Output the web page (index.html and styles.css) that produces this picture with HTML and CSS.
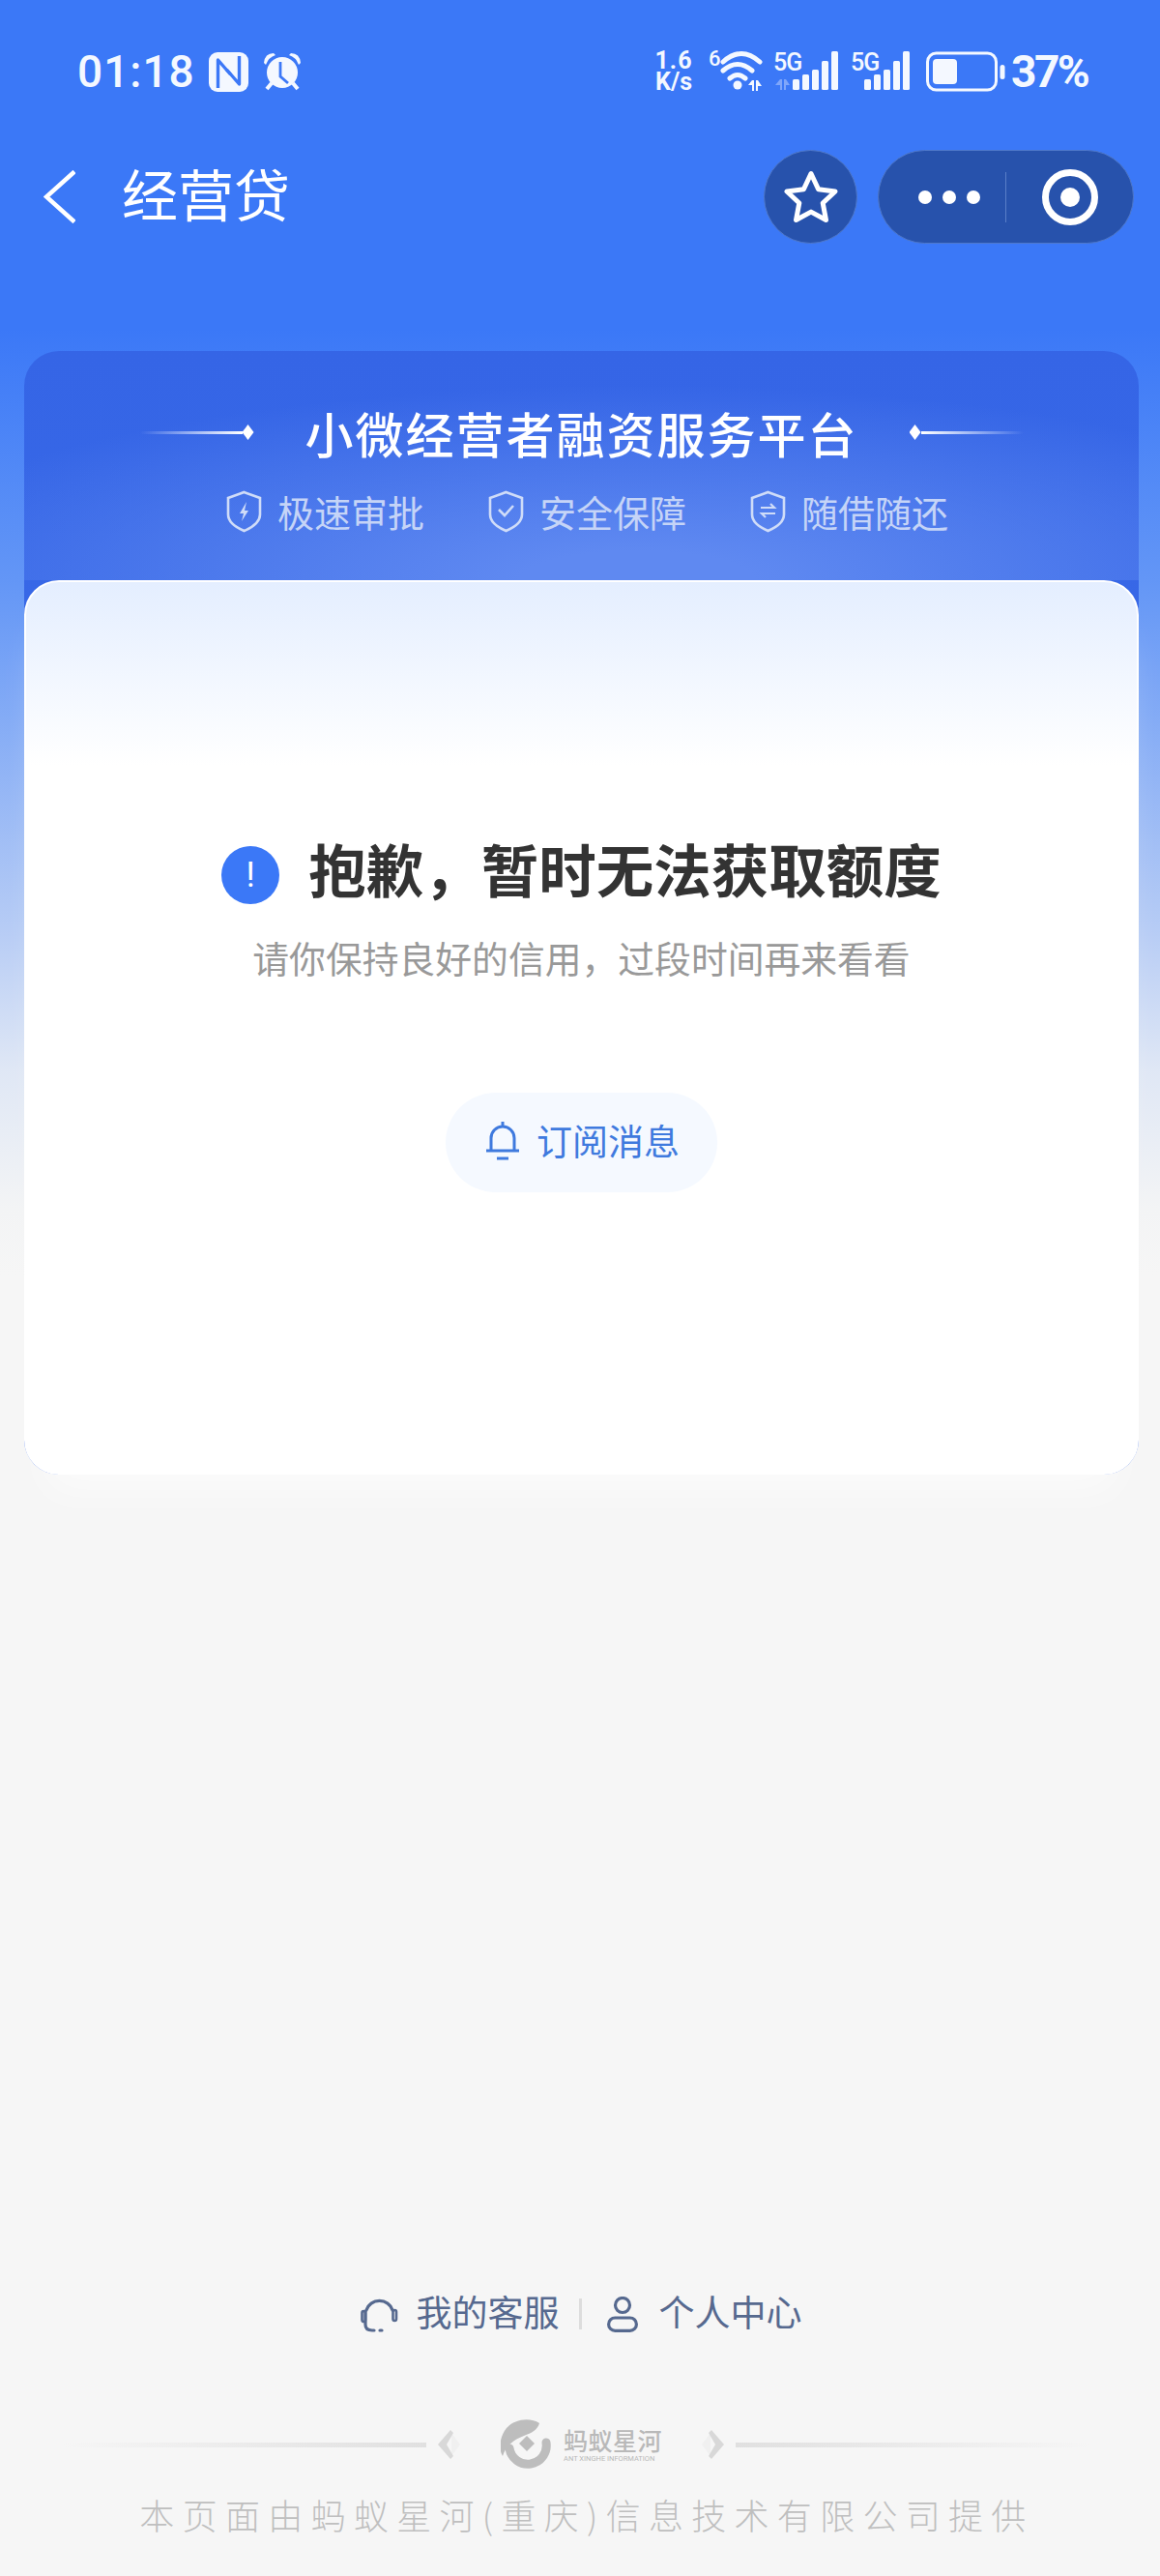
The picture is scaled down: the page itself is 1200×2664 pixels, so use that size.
FILE: index.html
```html
<!DOCTYPE html>
<html lang="zh-CN">

<head>
    <meta charset="UTF-8">
    <meta name="viewport" content="width=device-width, initial-scale=1.0">
    <title>经营贷</title>
    <link rel="stylesheet" href="styles.css">
</head>

<body>
    <div class="page">
        <div class="status">
            <span class="time">01:18</span>
            <svg class="ic-nfc" viewBox="0 0 41 41">
                <rect width="41" height="41" rx="9" fill="#f4f8ff" />
                <path fill="none" stroke="#3c78f7" stroke-width="3.400" stroke-linejoin="round" d="M9.500 37V8l13 15" />
                <path fill="none" stroke="#3c78f7" stroke-width="3.400" stroke-linejoin="round" d="M31.500 4v29l-13-15" />
            </svg>
            <svg class="ic-alarm" viewBox="0 0 41 41">
                <circle cx="20" cy="21" r="16" fill="#f4f8ff" />
                <path fill="#f4f8ff" d="M1 11Q2 1 11 1L13 3Q6 5 3 13zM39 11Q38 1 29 1L27 3Q34 5 37 13z" />
                <path stroke="#f4f8ff" stroke-width="4" d="M9 32l-5 6M31 32l5 6" />
                <path fill="none" stroke="#3c78f7" stroke-width="2.800" d="M18 10v15l8 7" />
            </svg>

            <div class="speed"><span class="speed-num">1.6</span><span>K/s</span></div>
            <svg class="ic-wifi" viewBox="0 0 57 42">
                <text x="0" y="15" class="svg-txt" font-size="22">6</text>
                <path fill="none" stroke="#f4f8ff" stroke-width="5" stroke-linecap="round" d="M15 11Q34-6 53 11" />
                <path fill="none" stroke="#f4f8ff" stroke-width="5" stroke-linecap="round" d="M15 20Q30 7 45 20" />
                <path fill="none" stroke="#f4f8ff" stroke-width="5" stroke-linecap="round" d="M22 28Q30 21 38 28" />
                <circle cx="30" cy="35" r="4.500" fill="#f4f8ff" />
                <path fill="#f4f8ff" d="M41 35l4-5h2v11h-2v-6zM49 30h2l4 6h-4v5h-2z" />
            </svg>
            <svg class="ic-sig" viewBox="0 0 67 42">
                <text x="0" y="20" class="svg-txt" font-size="25" letter-spacing="-1">5G</text>
                <path fill="#7fa6fa" d="M2 35l5-6h2v11H7v-5zM11 29h2l4 6h-4v5h-2z" />
                <rect x="20" y="29" width="7" height="11" rx="1.500" fill="#f4f8ff" />
                <rect x="30" y="24" width="7" height="16" rx="1.500" fill="#f4f8ff" />
                <rect x="40" y="19" width="7" height="21" rx="1.500" fill="#f4f8ff" />
                <rect x="50" y="10" width="7" height="30" rx="1.500" fill="#f4f8ff" />
                <rect x="60" y="0" width="7" height="40" rx="1.500" fill="#f4f8ff" />
            </svg>
            <svg class="ic-sig2" viewBox="0 0 61 42">
                <text x="0" y="20" class="svg-txt" font-size="25" letter-spacing="-1">5G</text>
                <rect x="14" y="29" width="7" height="11" rx="1.500" fill="#f4f8ff" />
                <rect x="24" y="24" width="7" height="16" rx="1.500" fill="#f4f8ff" />
                <rect x="34" y="19" width="7" height="21" rx="1.500" fill="#f4f8ff" />
                <rect x="44" y="10" width="7" height="30" rx="1.500" fill="#f4f8ff" />
                <rect x="54" y="0" width="7" height="40" rx="1.500" fill="#f4f8ff" />
            </svg>
            <svg class="ic-batt" viewBox="0 0 82 42">
                <rect x="1.500" y="2" width="71" height="38" rx="9" fill="none" stroke="#f4f8ff" stroke-width="3" />
                <rect x="7" y="8" width="25" height="26" rx="4" fill="#f4f8ff" />
                <rect x="76.500" y="14" width="5" height="15" rx="2.500" fill="#f4f8ff" />
            </svg>
            <span class="pct">37%</span>
        </div>

        <div class="nav">
            <svg class="ic-back" viewBox="0 0 33 55">
                <path fill="none" stroke="#fff" stroke-width="4.500" d="M32 1.500L3 27.500l29 26" />
            </svg>
            <h1 class="nav-title">经营贷</h1>
            <div class="actions">
                <div class="fav">
                    <svg class="ic-star" viewBox="0 0 56 56">
                        <path fill="none" stroke="#fff" stroke-width="5" stroke-linejoin="round" d="M28 3.500l7.600 16.300 17.400 2.200-12.800 12 3.300 17.500L28 43.100 12.500 51.500l3.300-17.500L3 22l17.400-2.200z" />
                    </svg>
                </div>
                <div class="capsule">
                    <div class="dots"><i></i><i></i><i></i></div>
                    <div class="cap-line"></div>
                    <div class="ring"><i></i></div>
                </div>
            </div>
        </div>

        <div class="panel">
            <div class="panel-head">
                <div class="slogan">
                    <div class="deco"><span class="deco-line"></span><span class="deco-dot"></span></div>
                    <h2 class="slogan-text">小微经营者融资服务平台</h2>
                    <div class="deco deco-right"><span class="deco-line"></span><span class="deco-dot"></span></div>
                </div>
                <div class="features">
                    <div class="feature">
                        <svg class="ic-shield" viewBox="0 0 37 44">
                            <path class="shield" d="M18.500 2L35 8v17q0 10-16.500 17Q2 35 2 25V8z" />
                            <path fill="#cfdcf8" d="M21 12l-7 12h4l-2 8 7-11h-4z" />
                        </svg>
                        <span>极速审批</span>
                    </div>
                    <div class="feature">
                        <svg class="ic-shield" viewBox="0 0 37 44">
                            <path class="shield" d="M18.500 2L35 8v17q0 10-16.500 17Q2 35 2 25V8z" />
                            <path fill="none" stroke="#cfdcf8" stroke-width="2.600" d="M11 20l6 6 9-10" />
                        </svg>
                        <span>安全保障</span>
                    </div>
                    <div class="feature">
                        <svg class="ic-shield" viewBox="0 0 37 44">
                            <path class="shield" d="M18.500 2L35 8v17q0 10-16.500 17Q2 35 2 25V8z" />
                            <path fill="none" stroke="#cfdcf8" stroke-width="2.200" d="M11 18h14l-4-4M26 24H12l4 4" />
                        </svg>
                        <span>随借随还</span>
                    </div>
                </div>
            </div>

            <div class="card">
                <div class="result">
                    <div class="result-ic">!</div>
                    <h3 class="result-title">抱歉，暂时无法获取额度</h3>
                </div>
                <p class="result-sub">请你保持良好的信用，过段时间再来看看</p>
                <div class="sub-btn">
                    <svg class="ic-bell" viewBox="0 0 36 42">
                        <path fill="none" stroke="#3f7ade" stroke-width="3" d="M1 32h34M6 32V19a12 12 0 0 1 24 0v13M18 7V2" />
                        <path stroke="#3f7ade" stroke-width="3" d="M12 40h12" />
                    </svg>
                    <span>订阅消息</span>
                </div>
            </div>
        </div>

        <div class="foot">
            <div class="links">
                <svg class="ic-head" viewBox="0 0 39 38">
                    <path fill="none" stroke="#56698f" stroke-width="3.200" stroke-linecap="round" d="M6 15a14 13 0 0 1 27 0M5 16v14q0 6 7 6h2M20 36h2" />
                    <rect x="1.500" y="16" width="3.500" height="11" rx="1.700" fill="none" stroke="#56698f" stroke-width="2.600" />
                    <rect x="33.500" y="15" width="3.500" height="11" rx="1.700" fill="none" stroke="#56698f" stroke-width="2.600" />
                </svg>
                <span class="link-text">我的客服</span>
                <span class="link-line"></span>
                <svg class="ic-user" viewBox="0 0 32 37">
                    <circle cx="16" cy="9" r="7.500" fill="none" stroke="#56698f" stroke-width="3.200" />
                    <rect x="1.600" y="22" width="28.800" height="13.400" rx="6.700" fill="none" stroke="#56698f" stroke-width="3.200" />
                </svg>
                <span class="link-text">个人中心</span>
            </div>

            <div class="brand">
                <span class="brand-line"></span>
                <svg class="ic-chev" viewBox="0 0 24 30">
                    <path fill="#f0f0f0" d="M14 3l9 12-9 12z" />
                    <path fill="#d8d8d8" d="M13 0L0 15l13 15 3-3-7-12 7-12z" />
                </svg>
                <svg class="ic-logo" viewBox="0 0 52 52">
                    <path fill="#bdbdbd" d="M40 4C31-2 15-1 6 9-2 19-2 32 2 38 5 28 13 21 24 17 32 14 38 11 40 4z" />
                    <path fill="none" stroke="#bdbdbd" stroke-width="9" stroke-linecap="round" d="M9 30A18.500 18.500 0 0 0 47 24" />
                    <path fill="#bdbdbd" d="M27 17l8 8-8 8-8-8z" />
                </svg>
                <div class="brand-name">
                    <span class="brand-cn">蚂蚁星河</span>
                    <span class="brand-en">ANT XINGHE INFORMATION</span>
                </div>
                <svg class="ic-chev ic-chev-r" viewBox="0 0 24 30">
                    <path fill="#f0f0f0" d="M10 3L1 15l9 12z" />
                    <path fill="#d8d8d8" d="M11 0l13 15-13 15-3-3 7-12L8 3z" />
                </svg>
                <span class="brand-line brand-line-r"></span>
            </div>

            <p class="copy">本页面由蚂蚁星河(重庆)信息技术有限公司提供</p>
        </div>
    </div>
</body>

</html>
```

FILE: styles.css
```css
* {
    box-sizing: border-box;
    margin: 0;
    padding: 0;
}

body {
    width: 1200px;
    height: 2664px;
    overflow: hidden;
    font-family: "Noto Sans CJK SC", "Noto Sans", sans-serif;
    background: #f6f6f6;
}

.page {
    display: flex;
    flex-direction: column;
    height: 2664px;
    background: linear-gradient(180deg, #3b78f7 0, #3b78f7 340px, #6396f6 600px, #b8cdf5 967px, #dfe7f5 1105px, #f3f4f5 1250px, #f6f6f6 1320px);
}

/* status bar */
.status {
    display: flex;
    align-items: center;
    height: 42px;
    margin-top: 53px;
    padding: 0 73px 0 80px;
    color: #f4f8ff;
}

.status svg {
    overflow: visible;
}

.svg-txt {
    font-family: Roboto, sans-serif;
    font-weight: 500;
    fill: #f4f8ff;
}

.time {
    width: 121px;
    font: 500 46px/42px Roboto, sans-serif;
    letter-spacing: 1px;
}

.ic-nfc {
    width: 41px;
    height: 41px;
    margin-left: 15px;
}

.ic-alarm {
    width: 41px;
    height: 41px;
    margin-left: 15px;
}

.speed {
    display: flex;
    flex-direction: column;
    align-items: center;
    width: 44px;
    margin-left: auto;
    font: 700 25px/22px Roboto, sans-serif;
}

.speed-num {
    letter-spacing: 1px;
}

.ic-wifi {
    width: 57px;
    height: 42px;
    margin-left: 14px;
}

.ic-sig {
    width: 67px;
    height: 42px;
    margin-left: 10px;
}

.ic-sig2 {
    width: 61px;
    height: 42px;
    margin-left: 13px;
}

.ic-batt {
    width: 82px;
    height: 42px;
    margin-left: 17px;
}

.pct {
    width: 81px;
    margin-left: 6px;
    font: 700 46px/42px Roboto, sans-serif;
    letter-spacing: -2.500px;
    white-space: nowrap;
}

/* nav */
.nav {
    display: flex;
    align-items: center;
    height: 97px;
    margin-top: 60px;
    padding: 0 27px 0 45px;
}

.ic-back {
    width: 33px;
    height: 55px;
}

.nav-title {
    margin: 0 0 10px 48px;
    font-size: 58px;
    font-weight: 400;
    line-height: 70px;
    color: #fff;
}

.actions {
    display: flex;
    gap: 21px;
    margin-left: auto;
}

.fav {
    display: flex;
    align-items: center;
    justify-content: center;
    width: 97px;
    height: 97px;
    border: 1px solid #4f78c9;
    border-radius: 50%;
    background: #2752ac;
}

.ic-star {
    width: 56px;
    height: 56px;
}

.capsule {
    display: flex;
    align-items: center;
    width: 265px;
    height: 97px;
    border: 1px solid #4f78c9;
    border-radius: 49px;
    background: #2752ac;
}

.dots {
    display: flex;
    gap: 11px;
    margin-left: 41px;
}

.dots i {
    width: 14px;
    height: 14px;
    border-radius: 50%;
    background: #fff;
}

.cap-line {
    width: 1px;
    height: 52px;
    margin-left: 26px;
    background: #5a7fc8;
}

.ring {
    display: flex;
    align-items: center;
    justify-content: center;
    width: 58px;
    height: 58px;
    margin-left: 37px;
    border: 7px solid #fff;
    border-radius: 50%;
}

.ring i {
    width: 20px;
    height: 20px;
    border-radius: 50%;
    background: #fff;
}

/* panel */
.panel {
    margin: 111px 22px 0 25px;
    border-radius: 36px;
    background: linear-gradient(180deg, #3565e6, #4070e9);
}

.panel-head {
    display: flex;
    flex-direction: column;
    align-items: center;
    height: 237px;
    padding-top: 50px;
    border-radius: 36px 36px 0 0;
    background: radial-gradient(ellipse 70% 85% at 55% 100%, #5f89f1 0, #5f89f1 15%, rgba(95, 137, 241, 0) 100%);
}

.slogan {
    display: flex;
    align-items: center;
    gap: 53px;
}

.slogan-text {
    font-size: 50px;
    font-weight: 500;
    line-height: 68px;
    letter-spacing: 2px;
    color: #fff;
}

.deco {
    display: flex;
    align-items: center;
    width: 118px;
}

.deco-right {
    flex-direction: row-reverse;
}

.deco-line {
    flex: 1;
    height: 3px;
    background: linear-gradient(90deg, rgba(255, 255, 255, 0), #fff);
}

.deco-right .deco-line {
    background: linear-gradient(270deg, rgba(255, 255, 255, 0), #fff);
}

.deco-dot {
    width: 12px;
    height: 16px;
    background: #fff;
    clip-path: polygon(50% 0, 100% 50%, 50% 100%, 0 50%);
}

.features {
    display: flex;
    gap: 66px;
    margin-top: 26px;
    padding-left: 12px;
}

.feature {
    display: flex;
    align-items: center;
    gap: 16px;
    font-size: 38px;
    line-height: 44px;
    color: #c5d4f7;
}

.ic-shield {
    width: 37px;
    height: 44px;
}

.shield {
    fill: none;
    stroke: #cfdcf8;
    stroke-width: 2.600;
}

.card {
    display: flex;
    flex-direction: column;
    align-items: center;
    height: 925px;
    padding-top: 273px;
    border: 2px solid #fff;
    border-radius: 36px;
    background: linear-gradient(180deg, #e4eeff 0, #ffffff 190px);
    box-shadow: 0 40px 40px -24px rgba(255, 255, 255, .6);
}

.result {
    display: flex;
    align-items: flex-start;
    height: 60px;
}

.result-ic {
    width: 60px;
    height: 60px;
    border-radius: 50%;
    background: #3b78f7;
    font: 400 36px/60px Roboto, sans-serif;
    text-align: center;
    color: #fff;
}

.result-title {
    margin: -8px 0 0 30px;
    font-size: 59.500px;
    font-weight: 700;
    line-height: 60px;
    color: #333;
}

.result-sub {
    margin-top: 30px;
    font-size: 37.800px;
    line-height: 50px;
    color: #999;
}

.sub-btn {
    display: flex;
    align-items: center;
    gap: 17px;
    height: 103px;
    margin-top: 115px;
    padding: 0 39px 6px 41px;
    border-radius: 52px;
    background: #f5f9ff;
    font-size: 37px;
    color: #3f7ade;
}

.ic-bell {
    width: 36px;
    height: 42px;
}

/* footer */
.foot {
    margin-top: auto;
    padding-bottom: 42px;
}

.links {
    display: flex;
    align-items: center;
    justify-content: center;
    height: 44px;
    padding-left: 2px;
    font-size: 37px;
    color: #56698f;
}

.link-text {
    margin-bottom: 6px;
}

.ic-head {
    width: 39px;
    height: 38px;
    margin-right: 19px;
}

.link-line {
    width: 3px;
    height: 32px;
    margin: 0 26px 0 20px;
    background: #ddd;
}

.ic-user {
    width: 32px;
    height: 37px;
    margin-right: 22px;
}

.brand {
    display: flex;
    align-items: center;
    height: 60px;
    margin-top: 83px;
    padding-left: 64px;
}

.brand-line {
    width: 377px;
    height: 5px;
    background: linear-gradient(90deg, rgba(226, 226, 226, 0), #e0e0e0);
}

.brand-line-r {
    width: 368px;
    background: linear-gradient(270deg, rgba(226, 226, 226, 0), #e0e0e0);
}

.ic-chev {
    width: 24px;
    height: 30px;
    margin-left: 12px;
}

.ic-chev-r {
    margin: 0 12px 0 38px;
}

.ic-logo {
    width: 52px;
    height: 52px;
    margin-left: 41px;
}

.brand-name {
    display: flex;
    flex-direction: column;
    width: 104px;
    margin-left: 13px;
    color: #b9b9b9;
}

.brand-cn {
    font-size: 25px;
    font-weight: 500;
    line-height: 30px;
    letter-spacing: .5px;
    white-space: nowrap;
}

.brand-en {
    font: 400 7.500px/10px Roboto, sans-serif;
    white-space: nowrap;
}

.copy {
    margin-top: 20px;
    padding-left: 14px;
    font-size: 36px;
    font-weight: 300;
    line-height: 44px;
    letter-spacing: 8.300px;
    text-align: center;
    color: #bfbfbf;
}
```
